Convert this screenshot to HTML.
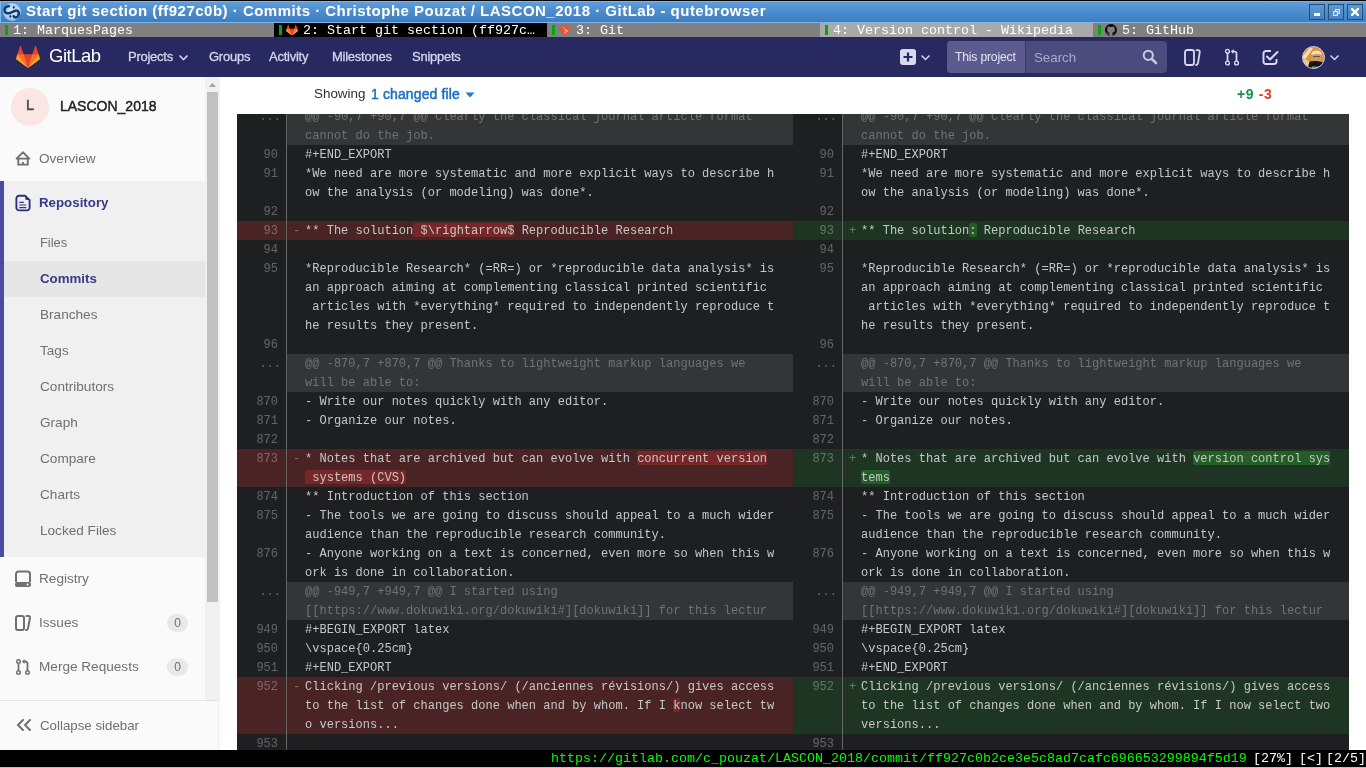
<!DOCTYPE html>
<html><head><meta charset="utf-8">
<style>
*{margin:0;padding:0;box-sizing:border-box}
html,body{width:1366px;height:768px;overflow:hidden;background:#fff;font-family:"Liberation Sans",sans-serif}
body{will-change:transform}
.abs{position:absolute}
/* title bar */
#title{position:absolute;left:0;top:0;width:1366px;height:23px;background:#000}
#titlein{position:absolute;left:0;top:1px;width:1366px;height:22px;background:linear-gradient(#5f9edb,#4b8acb 55%,#3d7cbe);border:1px solid #7db6ec;border-right:0}
#ttext{position:absolute;left:26px;top:2px;color:#fff;font-weight:bold;font-size:15px;letter-spacing:0.49px;white-space:pre;line-height:17px}
.wbtn{position:absolute;top:4px;width:16px;height:16px;border:1px solid #2c4d70;background:linear-gradient(#5b9bd9,#4283c6)}
/* tabs */
#tabs{position:absolute;left:0;top:23px;width:1366px;height:14px;background:#808080;font-family:"Liberation Mono",monospace;font-size:13.33px;color:#fff;white-space:pre}
.tab{position:absolute;top:0;height:14px}
.ind{position:absolute;left:5px;top:2px;width:3px;height:10px;background:#00aa00}
.tt{position:absolute;top:0px;line-height:16px}
/* nav */
#nav{position:absolute;left:0;top:37px;width:1366px;height:40px;background:#292961}
.nl{position:absolute;top:12px;color:#d5d5ee;font-size:13px;-webkit-text-stroke:0.3px #d5d5ee;letter-spacing:-0.25px;line-height:16px;white-space:pre}
/* sidebar */
#side{position:absolute;left:0;top:77px;width:220px;height:673px;background:#fafafa}
.si{position:absolute;left:40px;font-size:13.6px;color:#707070;white-space:pre;line-height:16px;padding-top:1px}
/* main */
#diff{position:absolute;left:237px;top:114px;width:1112px;height:636px;background:#1d1f21;overflow:hidden}
.row{position:absolute;left:0;width:1112px}
.ln{position:absolute;width:50px;text-align:right;color:rgba(255,255,255,0.3);font-family:"Liberation Mono",monospace;font-size:12px;line-height:19px;padding-right:8px;padding-top:1px;border-right:1px solid #666;height:100%}
.lc{position:absolute;width:506px;color:#c5c8c6;font-family:"Liberation Mono",monospace;font-size:12.04px;line-height:19px;white-space:pre;padding-left:18px;padding-top:1px;height:100%}
.lc.m{background:#343537;color:#717273}
.ln.dots{padding-right:5px}
.old{background:#4a2325}
.new{background:#1f3523}
.io{background:#772728;position:relative;top:-1px;border-radius:2px}
.it{position:relative;top:1px}
.in{background:#235e26;position:relative;top:-1px;border-radius:2px}
.mk{position:absolute;left:6px;top:1px;color:rgba(255,255,255,0.33)}
#status{position:absolute;left:0;top:750px;width:1366px;height:18px;background:#000;font-family:"Liberation Mono",monospace;font-size:13.33px;white-space:pre}
</style></head><body>

<div id="title"><div id="titlein"></div>
<svg class="abs" style="left:3px;top:3px" width="18" height="18" viewBox="0 0 18 18"><defs><radialGradient id="qg" cx="50%" cy="45%" r="55%"><stop offset="0" stop-color="#dcecfc"/><stop offset="0.7" stop-color="#b2d3f5"/><stop offset="1" stop-color="#86b7ea"/></radialGradient></defs><circle cx="9" cy="9" r="8.9" fill="url(#qg)"/><path d="M5.9 3.2 C2.6 2.9 1.1 6 1.8 8.4 C2.5 10.6 5.2 10.7 7.4 9.9 L10.6 8.4 C12.6 7.4 14.9 6.9 15.6 9.2 C16.3 11.6 14.8 14.6 12.8 14.5 C11.6 14.4 10.8 13.8 10.6 13.2" fill="none" stroke="#0d3b72" stroke-width="2.5" stroke-linecap="round"/><ellipse cx="10.8" cy="4.3" rx="0.9" ry="1.5" fill="#0d3b72"/><ellipse cx="7.3" cy="13.3" rx="0.9" ry="1.5" fill="#0d3b72"/></svg>
<div id="ttext">Start git section (ff927c0b) · Commits · Christophe Pouzat / LASCON_2018 · GitLab - qutebrowser</div>
<div class="wbtn" style="left:1309px"><div class="abs" style="left:4px;top:8px;width:6px;height:3px;background:#fff"></div></div>
<div class="wbtn" style="left:1328px"><svg class="abs" style="left:4px;top:4px" width="7" height="7" viewBox="0 0 7 7"><rect x="2.6" y="0.6" width="3.8" height="3.8" fill="none" stroke="#eadfcf" stroke-width="1.2"/><rect x="0.6" y="2.6" width="3.8" height="3.8" fill="#4a8acb" stroke="#eadfcf" stroke-width="1.2"/></svg></div>
<div class="wbtn" style="left:1347px"><svg class="abs" style="left:3px;top:3px" width="8" height="8" viewBox="0 0 8 8"><path d="M1 1 L7 7 M7 1 L1 7" stroke="#fff" stroke-width="2.4" stroke-linecap="square"/></svg></div>
</div>

<div id="tabs">
<div class="tab" style="left:0;width:274px;background:#808080"><div class="ind"></div><div class="tt" style="left:13px">1: MarquesPages</div></div>
<div class="tab" style="left:274px;width:273px;background:#000"><div class="ind"></div><svg class="abs" style="left:12px;top:1px" width="12" height="12" viewBox="0 0 36 36"><path fill="#e24329" d="M2 14l9.38 9v-9l-4-12.28c-.205-.632-1.176-.632-1.38 0z"/><path fill="#e24329" d="M34 14l-9.38 9v-9l4-12.28c.205-.632 1.176-.632 1.38 0z"/><path fill="#e24329" d="M18,34.38 3,14 33,14 Z"/><path fill="#fc6d26" d="M18,34.38 11.38,14 2,14 6,25Z"/><path fill="#fc6d26" d="M18,34.38 24.62,14 34,14 30,25Z"/><path fill="#fca326" d="M2 14L.1 20.16c-.18.565 0 1.2.5 1.56l17.42 12.66z"/><path fill="#fca326" d="M34 14l1.9 6.16c.18.565 0 1.2-.5 1.56L18 34.38z"/></svg><div class="tt" style="left:29px">2: Start git section (ff927c…</div></div>
<div class="tab" style="left:547px;width:273px;background:#808080"><div class="ind"></div><svg class="abs" style="left:12px;top:1px" width="12" height="12" viewBox="0 0 12 12"><path d="M6 0 L12 6 L6 12 L0 6 Z" fill="#f05133"/><path d="M4.2 3 L6.3 5.1 V8.6 M6.3 5.1 L8.3 7.1" stroke="#f7b8a8" stroke-width="1" fill="none"/><circle cx="6.3" cy="8.6" r="0.9" fill="#f7b8a8"/><circle cx="8.3" cy="7.1" r="0.9" fill="#f7b8a8"/></svg><div class="tt" style="left:29px">3: Git</div></div>
<div class="tab" style="left:820px;width:273px;background:#a9a9a9"><div class="ind"></div><div class="tt" style="left:13px">4: Version control - Wikipedia</div></div>
<div class="tab" style="left:1093px;width:273px;background:#808080"><div class="ind"></div><svg class="abs" style="left:12px;top:1px" width="12" height="12" viewBox="0 0 16 16"><path fill="#111" d="M8 0C3.58 0 0 3.58 0 8c0 3.54 2.29 6.53 5.47 7.59.4.07.55-.17.55-.38 0-.19-.01-.82-.01-1.49-2.01.37-2.53-.49-2.69-.94-.09-.23-.48-.94-.82-1.13-.28-.15-.68-.52-.01-.53.63-.01 1.08.58 1.23.82.72 1.21 1.87.87 2.33.66.07-.52.28-.87.51-1.07-1.78-.2-3.64-.89-3.64-3.95 0-.87.31-1.59.82-2.15-.08-.2-.36-1.02.08-2.12 0 0 .67-.21 2.2.82.64-.18 1.32-.27 2-.27.68 0 1.36.09 2 .27 1.53-1.04 2.2-.82 2.2-.82.44 1.1.16 1.92.08 2.12.51.56.82 1.27.82 2.15 0 3.07-1.87 3.75-3.65 3.95.29.25.54.73.54 1.48 0 1.07-.01 1.93-.01 2.2 0 .21.15.46.55.38A8.013 8.013 0 0016 8c0-4.42-3.58-8-8-8z"/></svg><div class="tt" style="left:29px">5: GitHub</div></div>
</div>

<div id="nav">
<svg class="abs" style="left:16px;top:8px" width="24" height="24" viewBox="0 0 36 36"><path fill="#e24329" d="M2 14l9.38 9v-9l-4-12.28c-.205-.632-1.176-.632-1.38 0z"/><path fill="#e24329" d="M34 14l-9.38 9v-9l4-12.28c.205-.632 1.176-.632 1.38 0z"/><path fill="#e24329" d="M18,34.38 3,14 33,14 Z"/><path fill="#fc6d26" d="M18,34.38 11.38,14 2,14 6,25Z"/><path fill="#fc6d26" d="M18,34.38 24.62,14 34,14 30,25Z"/><path fill="#fca326" d="M2 14L.1 20.16c-.18.565 0 1.2.5 1.56l17.42 12.66z"/><path fill="#fca326" d="M34 14l1.9 6.16c.18.565 0 1.2-.5 1.56L18 34.38z"/></svg>
<div class="abs" style="left:49px;top:8px;color:#fff;font-size:18.5px;letter-spacing:-0.5px;line-height:22px">GitLab</div>
<div class="nl" style="left:128px">Projects</div>
<svg class="abs" style="left:178px;top:17px" width="11" height="8" viewBox="0 0 11 8"><path d="M1.5 1.5 L5.5 5.5 L9.5 1.5" fill="none" stroke="#d5d5ee" stroke-width="1.6"/></svg>
<div class="nl" style="left:209px">Groups</div>
<div class="nl" style="left:269px">Activity</div>
<div class="nl" style="left:332px">Milestones</div>
<div class="nl" style="left:412px">Snippets</div>
<div class="abs" style="left:900px;top:12px;width:16px;height:16px;border-radius:3px;background:#d9d9f0"></div>
<svg class="abs" style="left:900px;top:12px" width="16" height="16" viewBox="0 0 16 16"><path d="M8 3.5 V12.5 M3.5 8 H12.5" stroke="#292961" stroke-width="2.2"/></svg>
<svg class="abs" style="left:920px;top:17px" width="11" height="8" viewBox="0 0 11 8"><path d="M1.5 1.5 L5.5 5.5 L9.5 1.5" fill="none" stroke="#d5d5ee" stroke-width="1.5"/></svg>
<div class="abs" style="left:947px;top:4px;width:220px;height:32px;border-radius:4px;background:#4b4b7d;overflow:hidden">
  <div class="abs" style="left:0;top:0;width:79px;height:32px;background:#5b5b8d;border-right:1px solid #34347a"></div>
  <div class="abs" style="left:8px;top:9px;color:#e4e4f2;font-size:12.2px;line-height:15px;white-space:pre;letter-spacing:-0.2px">This project</div>
  <div class="abs" style="left:87px;top:9px;color:#a9a9cc;font-size:13.3px;line-height:15px">Search</div>
  <svg class="abs" style="left:195px;top:8px" width="16" height="16" viewBox="0 0 16 16"><circle cx="6.3" cy="6.3" r="4.6" fill="none" stroke="#c8c8e2" stroke-width="2"/><path d="M9.8 9.8 L14 14" stroke="#c8c8e2" stroke-width="2.6" stroke-linecap="round"/></svg>
</div>
<svg class="abs" style="left:1184px;top:12px" width="17" height="17" viewBox="0 0 17 17"><rect x="1" y="1" width="9" height="15" rx="2.2" fill="none" stroke="#d9d9f0" stroke-width="1.8"/><path d="M12.5 1.2 H14 A1.8 1.8 0 0 1 15.8 3 L14 14 A2.2 2.2 0 0 1 12 16" fill="none" stroke="#d9d9f0" stroke-width="1.8" stroke-linecap="round"/></svg>
<svg class="abs" style="left:1224px;top:11px" width="16" height="18" viewBox="0 0 16 18"><circle cx="3.5" cy="3.3" r="1.9" fill="none" stroke="#d9d9f0" stroke-width="1.4"/><circle cx="3.5" cy="15" r="1.9" fill="none" stroke="#d9d9f0" stroke-width="1.4"/><circle cx="12.5" cy="15" r="1.9" fill="none" stroke="#d9d9f0" stroke-width="1.4"/><path d="M3.5 5.2 V13.1 M12.5 13.1 V5.5 A2 2 0 0 0 10.5 3.5 H8.5" fill="none" stroke="#d9d9f0" stroke-width="1.7"/><path d="M9.5 1 L6.8 3.5 L9.5 6 Z" fill="#d9d9f0"/></svg>
<svg class="abs" style="left:1262px;top:12px" width="17" height="17" viewBox="0 0 17 17"><path d="M9 2 H4 A2.5 2.5 0 0 0 1.5 4.5 V12.5 A2.5 2.5 0 0 0 4 15 H12 A2.5 2.5 0 0 0 14.5 12.5 V10" fill="none" stroke="#d9d9f0" stroke-width="1.9"/><path d="M5 7.5 L8 10.5 L15.5 3" fill="none" stroke="#d9d9f0" stroke-width="2" stroke-linecap="round" stroke-linejoin="round"/></svg>
<svg class="abs" style="left:1302px;top:9px" width="23" height="23" viewBox="0 0 23 23"><defs><clipPath id="avc"><circle cx="11.5" cy="11.5" r="11"/></clipPath></defs><g clip-path="url(#avc)"><rect width="23" height="23" fill="#d9973a"/><path d="M0 11 L8 1.5 L11 2.5 L2.5 14 Z" fill="#f2dcb4"/><path d="M0 14 C3 12.5 7 14 9 18 L5 23 L0 23 Z" fill="#eac89a"/><ellipse cx="14.5" cy="11" rx="4.5" ry="5" fill="#c99b72"/><path d="M9.5 7 C11 4 17 3.5 19.5 7 L19.5 9 C17 7.5 12 7.5 9.5 9.5 Z" fill="#efe0c0"/><path d="M11 10.5 H18" stroke="#5a4030" stroke-width="0.8"/><path d="M5.5 23 L7.5 15.5 C11 14.5 17 15 23 16.5 L23 23 Z" fill="#161616"/><path d="M10 20.5 H17 V23 H10 Z" fill="#888"/></g><circle cx="11.5" cy="11.5" r="11" fill="none" stroke="#c4c4e6" stroke-width="1"/></svg>
<svg class="abs" style="left:1329px;top:17px" width="11" height="8" viewBox="0 0 11 8"><path d="M1.5 1.5 L5.5 5.5 L9.5 1.5" fill="none" stroke="#d5d5ee" stroke-width="1.5"/></svg>
</div>

<div id="side"></div>
<div class="abs" style="left:205px;top:77px;width:15px;height:623px;background:#f1f1f1"></div>
<div class="abs" style="left:207px;top:92px;width:11px;height:510px;background:#c1c1c1"></div>
<svg class="abs" style="left:205px;top:80px" width="15" height="10"><path d="M4 7 L7.5 3 L11 7 Z" fill="#a3a3a3"/></svg>
<div class="abs" style="left:11px;top:88px;width:38px;height:38px;border-radius:50%;background:#fbe6e3"></div>
<div class="abs" style="left:26px;top:97px;font-size:14.5px;line-height:17px;color:#4a4a4a;-webkit-text-stroke:0.5px #4a4a4a">L</div>
<div class="abs si" style="left:60px;top:97px;color:#222;font-size:14px;-webkit-text-stroke:0.45px #222">LASCON_2018</div>
<svg class="abs" style="left:15px;top:150px" width="17" height="17" viewBox="0 0 17 17"><path d="M1.6 8.6 L7.9 2.3 L14.3 8.6 Z" fill="none" stroke="#707070" stroke-width="1.9" stroke-linejoin="round"/><path d="M3.3 8.6 V14.6 H12.8 V8.6 M8 14.8 V12" fill="none" stroke="#707070" stroke-width="1.9"/></svg>
<div class="abs si" style="left:39px;top:150px">Overview</div>
<div class="abs" style="left:0;top:181px;width:205px;height:376px;background:#f0f0f0"></div>
<div class="abs" style="left:0;top:181px;width:4px;height:376px;background:#4b4ba3"></div>
<svg class="abs" style="left:15px;top:194px" width="17" height="18" viewBox="0 0 17 18"><path d="M4 1.8 H10.3 L14.6 6.1 V13.8 A2.6 2.6 0 0 1 12 16.4 H4 A2.6 2.6 0 0 1 1.4 13.8 V4.4 A2.6 2.6 0 0 1 4 1.8 Z" fill="none" stroke="#303080" stroke-width="1.9" stroke-linejoin="round"/><path d="M10.3 1.8 V4.6 A1.5 1.5 0 0 0 11.8 6.1 H14.6 Z" fill="#303080"/><path d="M4.3 8.3 H8.8 M4.3 11 H11.3 M4.3 13.6 H11.3" stroke="#303080" stroke-width="1.15"/></svg>
<div class="abs si" style="left:39px;top:194px;font-weight:bold;color:#393985;font-size:13.3px">Repository</div>
<div class="abs si" style="left:40px;top:234px;font-size:12.9px">Files</div>
<div class="abs" style="left:4px;top:261px;width:201px;height:36px;background:#e6e6e6"></div>
<div class="abs si" style="left:40px;top:270px;font-weight:bold;color:#393985;font-size:13.3px">Commits</div>
<div class="abs si" style="left:40px;top:306px">Branches</div>
<div class="abs si" style="left:40px;top:342px">Tags</div>
<div class="abs si" style="left:40px;top:378px">Contributors</div>
<div class="abs si" style="left:40px;top:414px">Graph</div>
<div class="abs si" style="left:40px;top:450px">Compare</div>
<div class="abs si" style="left:40px;top:486px">Charts</div>
<div class="abs si" style="left:40px;top:522px">Locked Files</div>
<svg class="abs" style="left:14px;top:570px" width="18" height="18" viewBox="0 0 18 18"><path d="M2 12 V4 A2.5 2.5 0 0 1 4.5 1.5 H13.5 A2.5 2.5 0 0 1 16 4 V12" fill="none" stroke="#707070" stroke-width="2"/><rect x="1" y="12" width="16" height="5" rx="2" fill="#707070"/><circle cx="13.5" cy="14.5" r="1" fill="#fafafa"/></svg>
<div class="abs si" style="left:39px;top:570px">Registry</div>
<svg class="abs" style="left:14px;top:614px" width="18" height="18" viewBox="0 0 18 18"><rect x="2" y="2" width="8" height="14" rx="2" fill="none" stroke="#707070" stroke-width="2"/><path d="M12.5 2 H14.5 A1.5 1.5 0 0 1 16 3.7 L14 14.5 A2 2 0 0 1 12 16" fill="none" stroke="#707070" stroke-width="2" stroke-linecap="round"/></svg>
<div class="abs si" style="left:39px;top:614px">Issues</div>
<div class="abs" style="left:167px;top:614px;width:21px;height:18px;border-radius:9px;background:#e8e8e8;color:#707070;font-size:12px;line-height:18px;text-align:center">0</div>
<svg class="abs" style="left:15px;top:658px" width="16" height="18" viewBox="0 0 16 18"><circle cx="3.5" cy="3.5" r="1.8" fill="none" stroke="#707070" stroke-width="1.4"/><circle cx="3.5" cy="14.5" r="1.8" fill="none" stroke="#707070" stroke-width="1.4"/><circle cx="12.5" cy="14.5" r="1.8" fill="none" stroke="#707070" stroke-width="1.4"/><path d="M3.5 5.3 V12.7 M12.5 12.7 V5.5 A2 2 0 0 0 10.5 3.5 H8.5" fill="none" stroke="#707070" stroke-width="1.8"/><path d="M9.5 1 L7 3.5 L9.5 6 Z" fill="#707070"/></svg>
<div class="abs si" style="left:39px;top:658px">Merge Requests</div>
<div class="abs" style="left:167px;top:658px;width:21px;height:18px;border-radius:9px;background:#e8e8e8;color:#707070;font-size:12px;line-height:18px;text-align:center">0</div>
<div class="abs" style="left:0;top:700px;width:219px;height:50px;background:#fafafa;border-top:1px solid #e3e3e3;border-right:1px solid #efefef"></div>
<svg class="abs" style="left:15px;top:718px" width="18" height="14" viewBox="0 0 18 14"><path d="M8 2 L3 7 L8 12 M15 2 L10 7 L15 12" fill="none" stroke="#707070" stroke-width="2" stroke-linecap="round"/></svg>
<div class="abs si" style="left:40px;top:717px;font-size:13.3px">Collapse sidebar</div>


<div class="abs" style="left:314px;top:85px;font-size:13.4px;line-height:17px;color:#2e2e2e;white-space:pre">Showing</div><div class="abs" style="left:371px;top:86px;font-size:14px;line-height:17px;color:#1b6fc2;white-space:pre;letter-spacing:0.12px;-webkit-text-stroke:0.5px #1b6fc2">1 changed file</div>
<svg class="abs" style="left:465px;top:92px" width="10" height="6" viewBox="0 0 10 6"><path d="M0.5 0.5 H9.5 L5 5.5 Z" fill="#1f78d1"/></svg>
<div class="abs" style="left:1237px;top:86px;font-size:14px;line-height:17px;font-weight:bold;letter-spacing:0.6px;white-space:pre"><span style="color:#168f48">+9</span> <span style="color:#db3b21">-3</span></div>
<div id="diff">
<div class="ln dots" style="left:0px;top:-7px;height:38px">...</div><div class="lc m" style="left:50px;top:-7px;height:38px">@@ -90,7 +90,7 @@ Clearly the classical journal article format
cannot do the job.</div>
<div class="ln dots" style="left:556px;top:-7px;height:38px">...</div><div class="lc m" style="left:606px;top:-7px;height:38px">@@ -90,7 +90,7 @@ Clearly the classical journal article format
cannot do the job.</div>
<div class="ln" style="left:0px;top:31px;height:19px">90</div><div class="lc" style="left:50px;top:31px;height:19px">#+END_EXPORT</div>
<div class="ln" style="left:556px;top:31px;height:19px">90</div><div class="lc" style="left:606px;top:31px;height:19px">#+END_EXPORT</div>
<div class="ln" style="left:0px;top:50px;height:38px">91</div><div class="lc" style="left:50px;top:50px;height:38px">*We need are more systematic and more explicit ways to describe h
ow the analysis (or modeling) was done*.</div>
<div class="ln" style="left:556px;top:50px;height:38px">91</div><div class="lc" style="left:606px;top:50px;height:38px">*We need are more systematic and more explicit ways to describe h
ow the analysis (or modeling) was done*.</div>
<div class="ln" style="left:0px;top:88px;height:19px">92</div><div class="lc" style="left:50px;top:88px;height:19px"></div>
<div class="ln" style="left:556px;top:88px;height:19px">92</div><div class="lc" style="left:606px;top:88px;height:19px"></div>
<div class="ln old" style="left:0px;top:107px;height:19px">93</div><div class="lc old" style="left:50px;top:107px;height:19px"><span class="mk">-</span>** The solution<span class="io"><span class="it"> $\rightarrow$</span></span> Reproducible Research</div>
<div class="ln new" style="left:556px;top:107px;height:19px">93</div><div class="lc new" style="left:606px;top:107px;height:19px"><span class="mk">+</span>** The solution<span class="in"><span class="it">:</span></span> Reproducible Research</div>
<div class="ln" style="left:0px;top:126px;height:19px">94</div><div class="lc" style="left:50px;top:126px;height:19px"></div>
<div class="ln" style="left:556px;top:126px;height:19px">94</div><div class="lc" style="left:606px;top:126px;height:19px"></div>
<div class="ln" style="left:0px;top:145px;height:76px">95</div><div class="lc" style="left:50px;top:145px;height:76px">*Reproducible Research* (=RR=) or *reproducible data analysis* is
an approach aiming at complementing classical printed scientific
 articles with *everything* required to independently reproduce t
he results they present.</div>
<div class="ln" style="left:556px;top:145px;height:76px">95</div><div class="lc" style="left:606px;top:145px;height:76px">*Reproducible Research* (=RR=) or *reproducible data analysis* is
an approach aiming at complementing classical printed scientific
 articles with *everything* required to independently reproduce t
he results they present.</div>
<div class="ln" style="left:0px;top:221px;height:19px">96</div><div class="lc" style="left:50px;top:221px;height:19px"></div>
<div class="ln" style="left:556px;top:221px;height:19px">96</div><div class="lc" style="left:606px;top:221px;height:19px"></div>
<div class="ln dots" style="left:0px;top:240px;height:38px">...</div><div class="lc m" style="left:50px;top:240px;height:38px">@@ -870,7 +870,7 @@ Thanks to lightweight markup languages we
will be able to:</div>
<div class="ln dots" style="left:556px;top:240px;height:38px">...</div><div class="lc m" style="left:606px;top:240px;height:38px">@@ -870,7 +870,7 @@ Thanks to lightweight markup languages we
will be able to:</div>
<div class="ln" style="left:0px;top:278px;height:19px">870</div><div class="lc" style="left:50px;top:278px;height:19px">- Write our notes quickly with any editor.</div>
<div class="ln" style="left:556px;top:278px;height:19px">870</div><div class="lc" style="left:606px;top:278px;height:19px">- Write our notes quickly with any editor.</div>
<div class="ln" style="left:0px;top:297px;height:19px">871</div><div class="lc" style="left:50px;top:297px;height:19px">- Organize our notes.</div>
<div class="ln" style="left:556px;top:297px;height:19px">871</div><div class="lc" style="left:606px;top:297px;height:19px">- Organize our notes.</div>
<div class="ln" style="left:0px;top:316px;height:19px">872</div><div class="lc" style="left:50px;top:316px;height:19px"></div>
<div class="ln" style="left:556px;top:316px;height:19px">872</div><div class="lc" style="left:606px;top:316px;height:19px"></div>
<div class="ln old" style="left:0px;top:335px;height:38px">873</div><div class="lc old" style="left:50px;top:335px;height:38px"><span class="mk">-</span>* Notes that are archived but can evolve with <span class="io"><span class="it">concurrent version</span></span>
<span class="io"><span class="it"> systems (CVS)</span></span></div>
<div class="ln new" style="left:556px;top:335px;height:38px">873</div><div class="lc new" style="left:606px;top:335px;height:38px"><span class="mk">+</span>* Notes that are archived but can evolve with <span class="in"><span class="it">version control sys</span></span>
<span class="in"><span class="it">tems</span></span></div>
<div class="ln" style="left:0px;top:373px;height:19px">874</div><div class="lc" style="left:50px;top:373px;height:19px">** Introduction of this section</div>
<div class="ln" style="left:556px;top:373px;height:19px">874</div><div class="lc" style="left:606px;top:373px;height:19px">** Introduction of this section</div>
<div class="ln" style="left:0px;top:392px;height:38px">875</div><div class="lc" style="left:50px;top:392px;height:38px">- The tools we are going to discuss should appeal to a much wider
audience than the reproducible research community.</div>
<div class="ln" style="left:556px;top:392px;height:38px">875</div><div class="lc" style="left:606px;top:392px;height:38px">- The tools we are going to discuss should appeal to a much wider
audience than the reproducible research community.</div>
<div class="ln" style="left:0px;top:430px;height:38px">876</div><div class="lc" style="left:50px;top:430px;height:38px">- Anyone working on a text is concerned, even more so when this w
ork is done in collaboration.</div>
<div class="ln" style="left:556px;top:430px;height:38px">876</div><div class="lc" style="left:606px;top:430px;height:38px">- Anyone working on a text is concerned, even more so when this w
ork is done in collaboration.</div>
<div class="ln dots" style="left:0px;top:468px;height:38px">...</div><div class="lc m" style="left:50px;top:468px;height:38px">@@ -949,7 +949,7 @@ I started using
[[https://www.dokuwiki.org/dokuwiki#][dokuwiki]] for this lectur</div>
<div class="ln dots" style="left:556px;top:468px;height:38px">...</div><div class="lc m" style="left:606px;top:468px;height:38px">@@ -949,7 +949,7 @@ I started using
[[https://www.dokuwiki.org/dokuwiki#][dokuwiki]] for this lectur</div>
<div class="ln" style="left:0px;top:506px;height:19px">949</div><div class="lc" style="left:50px;top:506px;height:19px">#+BEGIN_EXPORT latex</div>
<div class="ln" style="left:556px;top:506px;height:19px">949</div><div class="lc" style="left:606px;top:506px;height:19px">#+BEGIN_EXPORT latex</div>
<div class="ln" style="left:0px;top:525px;height:19px">950</div><div class="lc" style="left:50px;top:525px;height:19px">\vspace{0.25cm}</div>
<div class="ln" style="left:556px;top:525px;height:19px">950</div><div class="lc" style="left:606px;top:525px;height:19px">\vspace{0.25cm}</div>
<div class="ln" style="left:0px;top:544px;height:19px">951</div><div class="lc" style="left:50px;top:544px;height:19px">#+END_EXPORT</div>
<div class="ln" style="left:556px;top:544px;height:19px">951</div><div class="lc" style="left:606px;top:544px;height:19px">#+END_EXPORT</div>
<div class="ln old" style="left:0px;top:563px;height:57px">952</div><div class="lc old" style="left:50px;top:563px;height:57px"><span class="mk">-</span>Clicking /previous versions/ (/anciennes révisions/) gives access
to the list of changes done when and by whom. If I <span class="io"><span class="it">k</span></span>now select tw
o versions...</div>
<div class="ln new" style="left:556px;top:563px;height:57px">952</div><div class="lc new" style="left:606px;top:563px;height:57px"><span class="mk">+</span>Clicking /previous versions/ (/anciennes révisions/) gives access
to the list of changes done when and by whom. If I now select two
versions...</div>
<div class="ln" style="left:0px;top:620px;height:19px">953</div><div class="lc" style="left:50px;top:620px;height:19px"></div>
<div class="ln" style="left:556px;top:620px;height:19px">953</div><div class="lc" style="left:606px;top:620px;height:19px"></div>
</div>

<div id="status">
<div class="abs" style="left:551px;top:0;color:#00ff00;line-height:17px">https://gitlab.com/c_pouzat/LASCON_2018/commit/ff927c0b2ce3e5c8ad7cafc696653299894f5d19</div>
<div class="abs" style="left:1253px;top:0;color:#fff;line-height:17px">[27%]</div>
<div class="abs" style="left:1299px;top:0;color:#fff;line-height:17px">[&lt;]</div>
<div class="abs" style="left:1326px;top:0;color:#fff;line-height:17px">[2/5]</div>
<div class="abs" style="left:0;top:17px;width:1366px;height:1px;background:#c0c0c0"></div>
</div>

</body></html>
